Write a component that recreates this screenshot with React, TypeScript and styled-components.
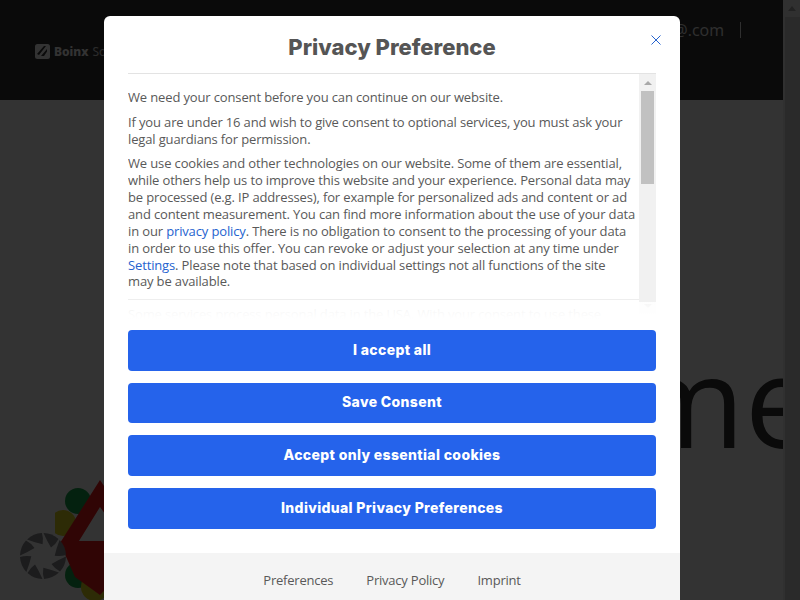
import React from 'react';
import styled, { createGlobalStyle } from 'styled-components';

const GlobalStyle = createGlobalStyle`
    html, body {
        margin: 0;
        height: 100%;
        overflow: hidden;
        background: #fff;
        font-family: 'Open Sans', 'Noto Sans', sans-serif;
    }
`;

/* page behind the dialog */
const Page = styled.div`
    display: flex;
    height: 600px;
    overflow: hidden;
`;

const PageMain = styled.div`
    flex: 1;
    min-width: 0;
    overflow: hidden;
    display: flex;
    flex-direction: column;
`;

const PageScrollbar = styled.div`
    width: 17px;
    flex: none;
    background: #f1f1f1;
    display: flex;
    flex-direction: column;
    align-items: center;
`;

const PageScrollUp = styled.div`
    height: 17px;
    flex: none;
    width: 100%;
    display: flex;
    align-items: center;
    justify-content: center;
    &::before {
        content: '';
        border: 4px solid transparent;
        border-top: 0;
        border-bottom: 5px solid #a8a8a8;
    }
`;

const PageScrollThumb = styled.div`
    flex: 1;
    width: 15px;
    margin-left: 2px;
    background: #d2d2d2;
`;

const SiteHeader = styled.header`
    height: 100px;
    flex: none;
    background: #323232;
    color: #fff;
    display: flex;
    align-items: center;
    padding-left: 35px;
`;

const Brand = styled.div`
    display: flex;
    align-items: center;
    gap: 4px;
    font-size: 12px;
    margin-top: 3px;
    font-family: 'Noto Sans', sans-serif;
    b {
        font-weight: 800;
    }
    span {
        font-weight: 400;
        opacity: 0.8;
    }
`;

const Contact = styled.div`
    margin-left: auto;
    display: flex;
    align-items: center;
    align-self: flex-start;
    margin-top: 20px;
    font-size: 16px;
    line-height: 20px;
    color: #fff;
    opacity: 0.9;
`;

const ContactRule = styled.div`
    width: 1px;
    height: 16px;
    background: #fff;
    margin: 0 42px 0 16px;
`;

const Hero = styled.section`
    flex: 1;
    background: #fff;
    display: flex;
    flex-direction: column;
`;

const HeroTitle = styled.h1`
    margin: 224px -33px 0 0;
    align-self: flex-end;
    white-space: nowrap;
    font-size: 127px;
    line-height: 150px;
    font-weight: 400;
    color: #323232;
    font-family: 'Open Sans', sans-serif;
`;

const SiteLogo = styled.svg`
    width: 110px;
    height: 130px;
    margin: 3px 0 0 55px;
    flex: none;
`;

const CookieBadge = styled.svg`
    position: absolute;
    left: 19px;
    bottom: 20px;
    width: 48px;
    height: 48px;
`;

const Overlay = styled.div`
    position: fixed;
    inset: 0;
    background: rgba(0, 0, 0, 0.8);
    overflow: hidden;
`;

/* dialog */
const Modal = styled.div`
    position: absolute;
    left: 104px;
    top: 16px;
    width: 576px;
    background: #fff;
    border-radius: 6px 6px 0 0;
`;

const ModalHeader = styled.div`
    height: 58px;
    margin: 0 24px;
    box-sizing: border-box;
    border-bottom: 1px solid #e3e3e3;
    display: flex;
    align-items: center;
    justify-content: center;
`;

const ModalTitle = styled.h2`
    margin: 5px 0 0;
    font-family: 'Inter', sans-serif;
    font-size: 22px;
    font-weight: 800;
    color: #555;
`;

const CloseButton = styled.button`
    position: absolute;
    right: 18px;
    top: 18px;
    width: 12px;
    height: 12px;
    padding: 0;
    border: 0;
    background: none;
    display: flex;
    svg {
        display: block;
    }
`;

const ScrollWrap = styled.div`
    position: relative;
    margin: 0 24px;
    height: 245px;
    display: flex;
    align-items: flex-start;
    &::after {
        content: '';
        position: absolute;
        left: 0;
        right: 0;
        bottom: 0;
        height: 17px;
        background: linear-gradient(to bottom, rgba(255, 255, 255, 0.9), #fff);
        pointer-events: none;
    }
`;

const ScrollBody = styled.div`
    flex: 1;
    min-width: 0;
    height: 245px;
    overflow: hidden;
    box-sizing: border-box;
    padding: 15.4px 3px 0 0;
    font-family: 'Open Sans', sans-serif;
    font-size: 13px;
    letter-spacing: -0.14px;
    line-height: 16.9px;
    color: #595959;
`;

const ScrollBar = styled.div`
    width: 17px;
    height: 240px;
    flex: none;
    background: #f1f1f1;
    display: flex;
    flex-direction: column;
    align-items: center;
`;

const ScrollArrow = styled.div<{ $down?: boolean }>`
    height: 17px;
    flex: none;
    display: flex;
    align-items: center;
    &::before {
        content: '';
        border: 4.5px solid transparent;
        border-top: ${(props) => (props.$down ? '4px solid #a8a8a8' : '0')};
        border-bottom: ${(props) => (props.$down ? '0' : '4px solid #a8a8a8')};
    }
`;

const ScrollThumb = styled.div`
    width: 13px;
    height: 93px;
    flex: none;
    background: #c1c1c1;
`;

const ScrollTrack = styled.div`
    flex: 1;
`;

const Para = styled.p`
    margin: 0 0 7.5px;
    a {
        color: #2563cf;
        text-decoration: none;
    }
`;

const Rule = styled.hr`
    border: 0;
    border-top: 1px solid #eee;
    margin: 9px -3px 6px 0;
`;

const ButtonStack = styled.div`
    margin: 11px 24px 24px;
    display: flex;
    flex-direction: column;
    gap: 12px;
`;

const ActionButton = styled.button`
    height: 40.67px;
    border: 0;
    border-radius: 4px;
    background: #2563eb;
    color: #fff;
    font-family: 'Inter', sans-serif;
    font-size: 14px;
    font-weight: 800;
    letter-spacing: 0.35px;
    padding: 0 0 2px;
`;

const ModalFooter = styled.div`
    background: #f4f4f4;
    height: 70px;
    padding-top: 18px;
    box-sizing: border-box;
    display: flex;
    justify-content: center;
    gap: 33px;
`;

const FooterLink = styled.a`
    font-family: 'Open Sans', sans-serif;
    font-size: 13px;
    letter-spacing: -0.22px;
    line-height: 18px;
    color: #595959;
    text-decoration: none;
`;

const BrandIcon = () => (
    <svg width="15" height="15" viewBox="0 0 15 15">
        <rect width="15" height="15" rx="2.5" fill="#fff" />
        <path d="M2 10 L9 2 H11 L4 11 Z M6 12 L12 5 V7.5 L9 12 Z" fill="#323232" />
    </svg>
);

const Rosette = () => {
    const petals = [0, 45, 90, 135, 180, 225, 270, 315];
    return (
        <CookieBadge viewBox="0 0 48 48">
            {petals.map((deg) => (
                <path
                    key={deg}
                    transform={`rotate(${deg} 24 24)`}
                    d="M24.5 1 A23 23 0 0 1 39.5 7 Q37 12 32 15.5 Q28 9 24.5 1 Z"
                    fill="#8a8a90"
                />
            ))}
        </CookieBadge>
    );
};

export default function App() {
    return (
        <>
            <GlobalStyle />
            <Page>
                <PageMain>
                    <SiteHeader>
                        <Brand>
                            <BrandIcon />
                            <b>Boinx</b>
                            <span>Software</span>
                        </Brand>
                        <Contact>
                            info@.com
                            <ContactRule />
                        </Contact>
                    </SiteHeader>
                    <Hero>
                        <HeroTitle>Welcome</HeroTitle>
                        <SiteLogo viewBox="0 0 110 130">
                            <circle cx="23" cy="24" r="13" fill="#18a34a" />
                            <circle cx="8" cy="46" r="13" fill="#e2d41e" />
                            <circle cx="23" cy="98" r="13" fill="#18a34a" />
                            <circle cx="40" cy="110" r="14" fill="#e2d41e" />
                            <path
                                d="M45 3 L90 70 L45 118 L20 100 L5 66 Z M45 30 L24 64 H70 Z"
                                fill="#f01c1c"
                                fillRule="evenodd"
                            />
                        </SiteLogo>
                        <Rosette />
                    </Hero>
                </PageMain>
                <PageScrollbar>
                    <PageScrollUp />
                    <PageScrollThumb />
                </PageScrollbar>
            </Page>
            <Overlay>
                <Modal>
                    <ModalHeader>
                        <ModalTitle>Privacy Preference</ModalTitle>
                    </ModalHeader>
                    <CloseButton aria-label="Close">
                        <svg width="12" height="12" viewBox="0 0 12 12">
                            <path d="M1.5 1.5 L10.5 10.5 M10.5 1.5 L1.5 10.5" stroke="#2563cf" strokeWidth="1" fill="none" />
                        </svg>
                    </CloseButton>
                    <ScrollWrap>
                        <ScrollBody>
                            <Para>We need your consent before you can continue on our website.</Para>
                            <Para>
                                If you are under 16 and wish to give consent to optional services, you must ask your
                                legal guardians for permission.
                            </Para>
                            <Para>
                                We use cookies and other technologies on our website. Some of them are essential,
                                while others help us to improve this website and your experience. Personal data may
                                be processed (e.g. IP addresses), for example for personalized ads and content or ad
                                and content measurement. You can find more information about the use of your data
                                in our <a href="#privacy">privacy policy</a>. There is no obligation to consent to the
                                processing of your data in order to use this offer. You can revoke or adjust your
                                selection at any time under <a href="#settings">Settings</a>. Please note that based
                                on individual settings not all functions of the site
                                <br />
                                may be available.
                            </Para>
                            <Rule />
                            <Para>
                                Some services process personal data in the USA. With your consent to use these
                                services, you also consent to the processing of your data in the USA.
                            </Para>
                        </ScrollBody>
                        <ScrollBar>
                            <ScrollArrow />
                            <ScrollThumb />
                            <ScrollTrack />
                            <ScrollArrow $down />
                        </ScrollBar>
                    </ScrollWrap>
                    <ButtonStack>
                        <ActionButton>I accept all</ActionButton>
                        <ActionButton>Save Consent</ActionButton>
                        <ActionButton>Accept only essential cookies</ActionButton>
                        <ActionButton>Individual Privacy Preferences</ActionButton>
                    </ButtonStack>
                    <ModalFooter>
                        <FooterLink href="#preferences">Preferences</FooterLink>
                        <FooterLink href="#privacy">Privacy Policy</FooterLink>
                        <FooterLink href="#imprint">Imprint</FooterLink>
                    </ModalFooter>
                </Modal>
            </Overlay>
        </>
    );
}
